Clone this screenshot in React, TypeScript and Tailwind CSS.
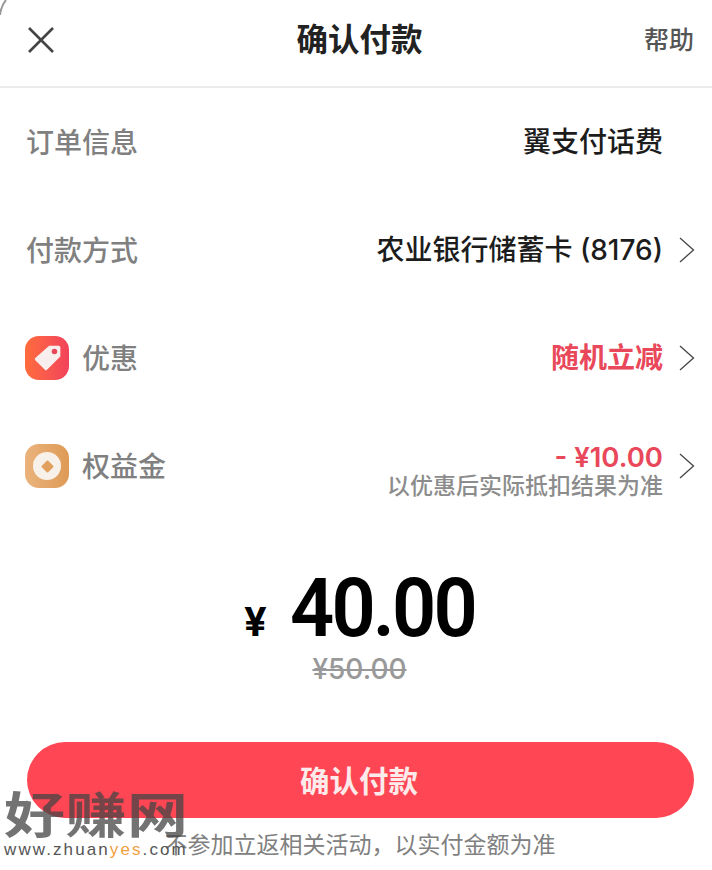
import React from 'react';

const FONT = 'font-["Inter","Noto_Sans_CJK_SC",sans-serif]';

const Chevron = () => (
  <svg width="18" height="28" viewBox="0 0 18 28" fill="none" className="shrink-0">
    <path d="M2 2 L15.5 14 L2 26" stroke="#444" strokeWidth="1.3" />
  </svg>
);

const TagIcon = () => (
  <div className="w-[44px] h-[44px] rounded-[14px] bg-gradient-to-r from-[#ff6c3c] to-[#f2415a] flex items-center justify-center shrink-0">
    <svg width="32" height="32" viewBox="0 0 30 30">
      <path d="M17 3.5 L26 3.5 Q27.5 3.5 27.5 5 L27.5 13.5 L15 26 Q14 27 13 26 L4 17 Q3 16 4 15 Z" fill="#f8eeee" />
      <circle cx="22" cy="9" r="2.6" fill="#e8485a" />
    </svg>
  </div>
);

const CoinIcon = () => (
  <div className="w-[44px] h-[44px] rounded-[14px] bg-gradient-to-r from-[#eab37c] to-[#de9a55] flex items-center justify-center shrink-0">
    <div className="w-[28px] h-[28px] rounded-full bg-[#f8f1ea] flex items-center justify-center">
      <div className="w-[9px] h-[9px] rotate-45 rounded-[1px] bg-[#e2a05e]" />
    </div>
  </div>
);

const Row = ({
  icon,
  label,
  chevron = true,
  children,
}: {
  icon?: React.ReactNode;
  label: string;
  chevron?: boolean;
  children: React.ReactNode;
}) => (
  <div className="h-[108px] flex items-center pl-[25px] pr-[16px]">
    {icon && <div className="mr-[13px]">{icon}</div>}
    <span className={`text-[28px] leading-none font-medium text-[#808080] mt-[2px] ${icon ? '' : 'pl-[1px]'}`}>{label}</span>
    <div className="ml-auto flex flex-col items-end">{children}</div>
    <div className="w-[18px] ml-[15px] flex justify-center">{chevron && <Chevron />}</div>
  </div>
);

export default function App() {
  return (
    <div className={`relative w-[712px] h-[870px] overflow-hidden bg-white ${FONT}`}>
      {/* sliver of the sheet's rounded corner */}
      <svg width="8" height="16" viewBox="0 0 8 16" fill="none" className="absolute left-0 top-0">
        <path d="M0 15 Q1 6 6 0" stroke="#9a9a9a" strokeWidth="2" />
      </svg>

      <header className="h-[88px] flex items-center justify-between pl-[27px] pr-[18px] border-b-2 border-[#ececec]">
        <svg width="28" height="28" viewBox="0 0 28 28" fill="none" className="mb-[7px]">
          <path d="M2 2 L26 26 M26 2 L2 26" stroke="#444" strokeWidth="2.6" />
        </svg>
        <h1 className="text-[31.5px] leading-none font-semibold text-[#222] mb-[7px] ml-[20px]">确认付款</h1>
        <span className="text-[25px] leading-none font-medium text-[#555] mb-[5px]">帮助</span>
      </header>

      <Row label="订单信息" chevron={false}>
        <span className="text-[28px] leading-none font-medium text-[#1c1c1c]">翼支付话费</span>
      </Row>
      <Row label="付款方式">
        <span className="text-[28px] leading-none font-medium text-[#1c1c1c]">农业银行储蓄卡 (8176)</span>
      </Row>
      <Row icon={<TagIcon />} label="优惠">
        <span className="text-[28px] leading-none font-semibold text-[#e8485a]">随机立减</span>
      </Row>
      <Row icon={<CoinIcon />} label="权益金">
        <span className="text-[27.5px] leading-[30px] font-semibold text-[#e8485a] mt-[9px]">- ¥10.00</span>
        <span className="text-[23px] leading-[26px] font-medium text-[#8c8c8c] mt-[1px]">以优惠后实际抵扣结果为准</span>
      </Row>

      <div className="h-[222px] flex flex-col items-center pt-[46px]">
        <div className="flex items-end justify-center h-[84px] text-black">
          <span className="text-[40px] leading-none font-bold mr-[23px] mb-[8px] ml-[6px]">¥</span>
          <span className="font-['Roboto',sans-serif] text-[82px] leading-[84px] font-semibold tracking-[-3px] scale-x-[0.945] origin-left w-[184px] whitespace-nowrap">
            40.00
          </span>
        </div>
        <span className="mt-[4px] ml-[7px] text-[28px] leading-[30px] font-medium text-[#999] line-through">¥50.00</span>
      </div>

      <div className="pl-[27px] pr-[18px]">
        <button className="w-full h-[76px] rounded-full bg-[#ff4655] text-[29.5px] font-semibold text-[#fdeaea] pt-[2px] pr-[3px]">
          确认付款
        </button>
      </div>
      <p className="mt-[13px] pl-[8px] text-center text-[23px] leading-[28px] text-[#808080]">不参加立返相关活动，以实付金额为准</p>

      {/* site watermark over the button corner */}
      <div className="absolute left-[4px] top-[783px] w-[190px]">
        <div className="font-['Noto_Sans_CJK_SC',sans-serif] text-[61px] leading-[60px] font-bold tracking-[0.5px] text-[#444]/75 whitespace-nowrap scale-y-[0.8] origin-top mt-[5px]">
          好赚网
        </div>
        <div className="font-['Liberation_Sans',sans-serif] text-[17px] leading-[18px] tracking-[2.1px] text-[#555] whitespace-nowrap -mt-[7px]">
          www.zhuan<span className="text-[#f0a040]">yes</span>.com
        </div>
      </div>
    </div>
  );
}
